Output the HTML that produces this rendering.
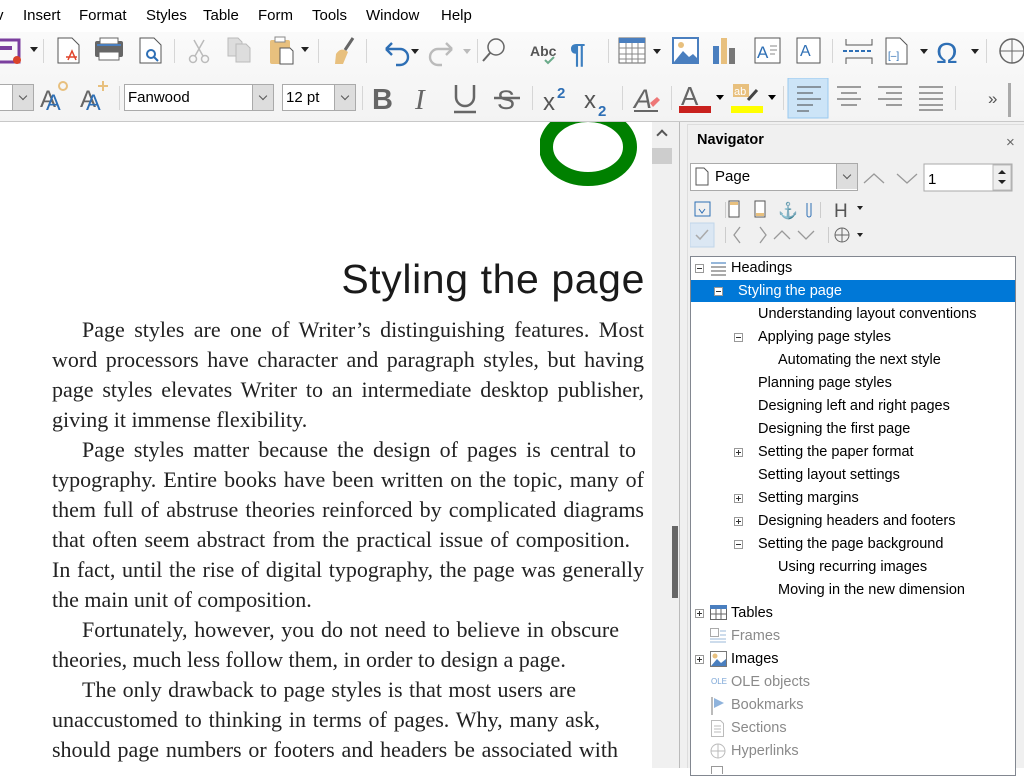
<!DOCTYPE html>
<html><head><meta charset="utf-8"><style>
*{margin:0;padding:0;box-sizing:border-box}
body{width:1024px;height:768px;overflow:hidden;position:relative;background:#fff;font-family:"Liberation Sans",sans-serif;font-size:14px;color:#000}
.abs{position:absolute}
#menu{left:0;top:0;width:1024px;height:32px;background:#fff}
#menu span{position:absolute;top:7px;font-size:15px}
#tb{left:0;top:32px;width:1024px;height:90px;background:linear-gradient(#fafafa,#f3f3f3)}
#tb2line{left:0;top:121px;width:1024px;height:1px;background:#c8c8c8}
.combo{position:absolute;height:27px;border:1px solid #aaa;background:#fff;font-size:15px;padding:4px 0 0 3px}
.combo i{position:absolute;right:0;top:0;width:21px;height:25px;background:#ddd;border-left:1px solid #aaa}
.combo i:after{content:"";position:absolute;left:7px;top:8px;width:5px;height:5px;border-right:1px solid #555;border-bottom:1px solid #555;transform:rotate(45deg)}
#doc{left:0;top:122px;width:652px;height:646px;background:#fff;overflow:hidden}
.ln{position:absolute;left:52px;width:592px;font-family:"Liberation Serif",serif;font-size:22px;color:#222;text-align:justify;text-align-last:justify;white-space:nowrap;line-height:30px}
.ln.l{text-align-last:left}
#vs{left:652px;top:122px;width:20px;height:646px;background:#f0f0f0}
#side{left:672px;top:122px;width:352px;height:646px;background:#f0f0f0}
#tree{left:690px;top:256px;width:326px;height:520px;background:#fff;border:1px solid #828790}
.r{position:absolute;font-size:14.5px;height:23px;line-height:23px;white-space:nowrap}
.pm{position:absolute;width:9px;height:9px;border:1px solid #999;background:#fff}
.pm:before{content:"";position:absolute;left:1px;top:3px;width:5px;height:1px;background:#333}
.pm.p:after{content:"";position:absolute;left:3px;top:1px;width:1px;height:5px;background:#333}
.g{color:#8a8a8a}
</style></head><body>
<div id="menu" class="abs">
<span style="left:-4px">v</span><span style="left:23px">Insert</span><span style="left:79px">Format</span><span style="left:146px">Styles</span><span style="left:203px">Table</span><span style="left:258px">Form</span><span style="left:312px">Tools</span><span style="left:366px">Window</span><span style="left:441px">Help</span>
</div>
<div id="tb" class="abs"></div>
<div id="tb2line" class="abs"></div>
<svg class="abs" style="left:0;top:32px" width="1024" height="40">
<rect x="-6" y="8" width="25" height="22" fill="none" stroke="#7b3f9e" stroke-width="3"/><rect x="-2" y="14" width="14" height="4" fill="#7b3f9e"/><circle cx="17" cy="28" r="4" fill="#d9432b"/>
<path d="M58 6h14l7 7v18h-21z" fill="#fff" stroke="#555"/><path d="M68 28l4-9 4 9m-10-3h11" stroke="#e0442b" fill="none" stroke-width="1.5"/>
<rect x="95" y="9" width="28" height="16" rx="2" fill="#666"/><rect x="100" y="6" width="18" height="6" fill="#fff" stroke="#666"/><rect x="99" y="20" width="20" height="8" fill="#fff" stroke="#666"/><rect x="97" y="12" width="24" height="2" fill="#4a7fbf"/>
<path d="M140 6h14l7 7v18h-21z" fill="#fff" stroke="#555"/><circle cx="151" cy="22" r="4" fill="none" stroke="#2e6fb5" stroke-width="2"/><path d="M154 25l4 4" stroke="#2e6fb5" stroke-width="2"/>
<g stroke="#bbb" fill="none" stroke-width="1.5"><circle cx="193" cy="27" r="3.5"/><circle cx="205" cy="27" r="3.5"/><path d="M195 24l9-16M203 24l-9-16"/></g>
<g fill="#ddd" stroke="#bbb"><path d="M228 6h10l4 4v14h-14z"/><path d="M236 12h10l4 4v14h-14z"/></g>
<rect x="270" y="8" width="20" height="24" rx="2" fill="#e8c07e"/><rect x="275" y="5" width="10" height="5" fill="#fff" stroke="#888"/><path d="M280 16h10l3 3v13h-13z" fill="#fff" stroke="#555"/>
<path d="M336 22c4-6 8-5 12-2l-5 12h-8z" fill="#e8c07e"/><path d="M345 18l8-12" stroke="#666" stroke-width="3"/>
<path d="M386 17h14a8 8 0 0 1 0 16h-4M386 17l6-6M386 17l6 6" stroke="#2e6fb5" stroke-width="2.4" fill="none"/>
<path d="M452 17h-14a8 8 0 0 0 0 16h4M452 17l-6-6M452 17l-6 6" stroke="#bbb" stroke-width="2.4" fill="none"/>
<circle cx="496" cy="15" r="8" fill="none" stroke="#666" stroke-width="1.5"/><path d="M490 21l-7 8" stroke="#666" stroke-width="2"/>
<text x="530" y="24" font-size="14" font-weight="bold" fill="#555" font-family="Liberation Sans">Abc</text><path d="M545 28l3 3 6-6" stroke="#6aaa8a" stroke-width="2" fill="none"/>
<text x="570" y="31" font-size="28" font-weight="bold" fill="#3d7fc0" font-family="Liberation Sans">¶</text>
<rect x="619" y="6" width="26" height="25" fill="#fff" stroke="#666"/><rect x="619" y="6" width="26" height="5" fill="#4a7fbf"/><path d="M619 16h26M619 22h26M619 27h26M626 11v20M632 11v20M638 11v20" stroke="#888"/>
<rect x="673" y="6" width="25" height="25" fill="#fff" stroke="#4a7fbf" stroke-width="2"/><path d="M674 30l9-11 6 6 4-3 5 5v3z" fill="#4a7fbf"/><circle cx="681" cy="13" r="3" fill="#e8c07e"/>
<rect x="713" y="14" width="6" height="18" fill="#4a7fbf"/><rect x="721" y="6" width="6" height="26" fill="#e8c07e"/><rect x="729" y="16" width="6" height="16" fill="#777"/>
<rect x="755" y="6" width="25" height="25" fill="#fff" stroke="#555"/><text x="757" y="26" font-size="17" fill="#2e6fb5" font-family="Liberation Sans">A</text><path d="M770 14h7M770 18h7M770 22h5" stroke="#888"/>
<rect x="797" y="6" width="23" height="25" fill="#fff" stroke="#555"/><text x="800" y="24" font-size="16" fill="#2e6fb5" font-family="Liberation Sans">A</text>
<path d="M846 7v6h26V7M846 32v-6h26v6" stroke="#555" fill="none"/><path d="M843 19h30" stroke="#2e6fb5" stroke-width="2" stroke-dasharray="4 2"/>
<path d="M886 6h14l7 7v19h-21z" fill="#fff" stroke="#555"/><text x="888" y="27" font-size="10" fill="#2e6fb5">[–]</text>
<text x="936" y="31" font-size="29" fill="#2e6fb5" font-family="Liberation Sans">Ω</text>
<circle cx="1012" cy="19" r="12" fill="none" stroke="#666" stroke-width="1.5"/><path d="M1000 19h24M1012 7v24" stroke="#666"/>
<g fill="#222"><path d="M30 15h8l-4 5z"/><path d="M301 15h8l-4 5z"/><path d="M411 17h8l-4 5z"/><path d="M463 17h8l-4 5z" fill="#bbb"/><path d="M653 17h8l-4 5z"/><path d="M920 17h8l-4 5z"/><path d="M971 17h8l-4 5z"/></g>
<g fill="#d6d6d6"><rect x="43" y="7" width="1" height="24"/><rect x="174" y="7" width="1" height="24"/><rect x="318" y="7" width="1" height="24"/><rect x="366" y="7" width="1" height="24"/><rect x="477" y="7" width="1" height="24"/><rect x="608" y="7" width="1" height="24"/><rect x="832" y="7" width="1" height="24"/><rect x="986" y="7" width="1" height="24"/></g>
</svg>
<div class="combo" style="left:-2px;top:84px;width:36px"><i></i></div>
<div class="combo" style="left:124px;top:84px;width:150px">Fanwood<i></i></div>
<div class="combo" style="left:282px;top:84px;width:74px">12 pt<i></i></div>
<svg class="abs" style="left:0;top:78px" width="1024" height="43">
<text x="40" y="29" font-size="24" fill="#666" font-family="Liberation Sans">A</text><text x="46" y="32" font-size="22" fill="#2e6fb5" font-family="Liberation Sans">A</text><circle cx="63" cy="8" r="4" fill="none" stroke="#e8c07e" stroke-width="2"/>
<text x="80" y="29" font-size="24" fill="#666" font-family="Liberation Sans">A</text><text x="86" y="32" font-size="22" fill="#2e6fb5" font-family="Liberation Sans">A</text><path d="M103 3v10M98 8h10" stroke="#e8c07e" stroke-width="2"/>
<text x="372" y="31" font-size="29" font-weight="bold" fill="#666" font-family="Liberation Sans">B</text>
<text x="415" y="31" font-size="29" font-style="italic" fill="#666" font-family="Liberation Serif">I</text>
<path d="M456 7v12a9 9 0 0 0 18 0V7M454 34h22" stroke="#666" stroke-width="2.5" fill="none"/>
<text x="497" y="31" font-size="27" fill="#666" font-family="Liberation Sans">S</text><path d="M494 20h26" stroke="#666" stroke-width="2.5"/>
<text x="543" y="32" font-size="24" fill="#555" font-family="Liberation Sans">x</text><text x="557" y="20" font-size="15" fill="#2e6fb5" font-weight="bold">2</text>
<text x="584" y="30" font-size="24" fill="#555" font-family="Liberation Sans">x</text><text x="598" y="38" font-size="15" fill="#2e6fb5" font-weight="bold">2</text>
<text x="634" y="30" font-size="27" fill="#666" font-family="Liberation Sans" font-style="italic">A</text><path d="M650 25l7-6 3 3-7 7z" fill="#e77"/><path d="M634 33h24" stroke="#666" stroke-width="2"/>
<text x="681" y="27" font-size="26" fill="#666" font-family="Liberation Sans">A</text><rect x="679" y="28" width="32" height="7" fill="#c9211e"/>
<rect x="733" y="6" width="16" height="13" fill="#e8c07e"/><text x="734" y="17" font-size="11" fill="#fff">ab</text><path d="M748 22l9-10" stroke="#444" stroke-width="3"/><rect x="731" y="28" width="32" height="7" fill="#ff0"/>
<path d="M716 17h8l-4 5z M768 17h8l-4 5z"/>
<rect x="788" y="0" width="40" height="40" fill="#cce4f7" stroke="#99c9ef"/>
<g stroke="#444"><path d="M797 9h24M797 15h16M797 21h24M797 27h16M797 33h12"/><path d="M837 9h24M841 15h16M837 21h24M841 27h16"/><path d="M878 9h24M886 15h16M878 21h24M886 27h16"/><path d="M919 9h24M919 15h24M919 21h24M919 27h24M919 32h24"/></g>
<text x="988" y="26" font-size="17" fill="#555">»</text>
<g fill="#d6d6d6"><rect x="119" y="8" width="1" height="24"/><rect x="362" y="8" width="1" height="24"/><rect x="532" y="8" width="1" height="24"/><rect x="622" y="8" width="1" height="24"/><rect x="671" y="8" width="1" height="24"/><rect x="783" y="8" width="1" height="24"/><rect x="955" y="8" width="1" height="24"/></g>
<rect x="1008" y="5" width="3" height="34" fill="#aaa"/>
</svg>
<div id="doc" class="abs">
<svg class="abs" style="left:540px;top:-10px" width="100" height="80"><ellipse cx="48" cy="35" rx="42" ry="32" fill="none" stroke="#008000" stroke-width="14"/></svg>
<div class="abs" style="right:7px;top:134px;font-size:41px;color:#1a1a1a;font-family:'Liberation Sans',sans-serif;letter-spacing:0.6px">Styling the page</div>
<div class="ln" style="top:193px;left:82px;width:562px">Page styles are one of Writer’s distinguishing features. Most</div>
<div class="ln" style="top:223px">word processors have character and paragraph styles, but having</div>
<div class="ln" style="top:253px">page styles elevates Writer to an intermediate desktop publisher,</div>
<div class="ln l" style="top:283px">giving it immense flexibility.</div>
<div class="ln" style="top:313px;left:82px;width:554px">Page styles matter because the design of pages is central to</div>
<div class="ln" style="top:343px">typography. Entire books have been written on the topic, many of</div>
<div class="ln" style="top:373px">them full of abstruse theories reinforced by complicated diagrams</div>
<div class="ln" style="top:403px;width:578px">that often seem abstract from the practical issue of composition.</div>
<div class="ln" style="top:433px">In fact, until the rise of digital typography, the page was generally</div>
<div class="ln l" style="top:463px">the main unit of composition.</div>
<div class="ln" style="top:493px;left:82px;width:537px">Fortunately, however, you do not need to believe in obscure</div>
<div class="ln l" style="top:523px">theories, much less follow them, in order to design a page.</div>
<div class="ln" style="top:553px;left:82px;width:494px">The only drawback to page styles is that most users are</div>
<div class="ln" style="top:583px;width:548px">unaccustomed to thinking in terms of pages. Why, many ask,</div>
<div class="ln" style="top:613px;width:566px">should page numbers or footers and headers be associated with</div>
</div>
<div id="vs" class="abs"><div class="abs" style="left:0;top:26px;width:20px;height:16px;background:#cdcdcd"></div><div class="abs" style="left:6px;top:9px;width:8px;height:8px;border-left:2px solid #555;border-top:2px solid #555;transform:rotate(45deg)"></div></div>
<div id="side" class="abs">
<div class="abs" style="left:0;top:0;width:8px;height:646px;background:#f0f0f0;border-right:1px solid #bbb"></div>
<div class="abs" style="left:0;top:404px;width:6px;height:72px;background:#666"></div>
<div class="abs" style="left:15px;top:2px;width:337px;height:644px;border-left:1px solid #ddd;border-top:1px solid #ddd"></div>
<div class="abs" style="left:25px;top:10px;font-weight:bold;font-size:14.5px">Navigator</div>
<div class="abs" style="left:334px;top:12px;font-size:15px;color:#666">×</div>
</div>
<div class="combo" style="left:690px;top:163px;width:168px;height:28px;font-size:15px;padding-left:24px">Page<i></i></div>
<svg class="abs" style="left:690px;top:163px" width="330" height="90">
<path d="M6 5h8l4 4v13H6z" fill="#fff" stroke="#555"/>
<path d="M174 20l10-9 10 9M207 11l10 9 10-9" stroke="#999" fill="none" stroke-width="1.3"/>
<rect x="234" y="1" width="88" height="27" fill="#fff" stroke="#aaa"/><text x="238" y="21" font-size="15" font-family="Liberation Sans">1</text>
<rect x="303" y="2" width="18" height="25" fill="#eee" stroke="#bbb"/><path d="M308 11h8l-4-4z M308 17h8l-4 4z" fill="#222"/>
<rect x="5" y="39" width="15" height="14" fill="none" stroke="#2e6fb5"/><path d="M9 46l3 4 3-4" stroke="#2e6fb5" fill="none"/>
<rect x="39" y="38" width="10" height="16" fill="#fff" stroke="#555"/><rect x="40" y="39" width="8" height="3" fill="#e8c07e"/>
<rect x="65" y="38" width="10" height="16" fill="#fff" stroke="#555"/><rect x="66" y="50" width="8" height="3" fill="#e8c07e"/>
<text x="88" y="53" font-size="16" fill="#2e6fb5">⚓</text><path d="M117 40v12a2 2 0 0 0 4 0V40" stroke="#2e6fb5" fill="none"/>
<text x="144" y="54" font-size="19" fill="#555" font-family="Liberation Sans">H</text><path d="M167 43h6l-3 4z" fill="#222"/>
<rect x="0" y="60" width="24" height="24" fill="#dbe7f3" stroke="#c0d6ea"/><path d="M6 72l4 4 8-9" stroke="#aaa" fill="none" stroke-width="1.5"/>
<path d="M50 64l-6 8 6 8M70 64l6 8-6 8M84 76l8-8 8 8M108 68l8 8 8-8" stroke="#999" fill="none" stroke-width="1.3"/>
<circle cx="152" cy="72" r="7" fill="none" stroke="#666"/><path d="M145 72h14M152 65v14" stroke="#666"/><path d="M167 70h6l-3 4z" fill="#222"/>
<g fill="#ccc"><rect x="35" y="39" width="1" height="16"/><rect x="130" y="39" width="1" height="16"/><rect x="35" y="64" width="1" height="16"/><rect x="138" y="64" width="1" height="16"/></g>
</svg>
<div id="tree" class="abs">
<div class="abs" style="left:0;top:23px;width:324px;height:22px;background:#0078d7"></div>
<div class="pm" style="left:4px;top:7px"></div>
<svg class="abs" style="left:20px;top:4px" width="16" height="16"><path d="M0 2h15M0 6h15M0 10h15M0 14h15" stroke="#555"/><path d="M0 2h15" stroke="#2e6fb5"/></svg>
<div class="r" style="left:40px;top:0">Headings</div>
<div class="pm" style="left:23px;top:30px"></div>
<div class="r" style="left:47px;top:23px;color:#fff">Styling the page</div>
<div class="r" style="left:67px;top:46px">Understanding layout conventions</div>
<div class="pm" style="left:43px;top:76px"></div><div class="r" style="left:67px;top:69px">Applying page styles</div>
<div class="r" style="left:87px;top:92px">Automating the next style</div>
<div class="r" style="left:67px;top:115px">Planning page styles</div>
<div class="r" style="left:67px;top:138px">Designing left and right pages</div>
<div class="r" style="left:67px;top:161px">Designing the first page</div>
<div class="pm p" style="left:43px;top:191px"></div><div class="r" style="left:67px;top:184px">Setting the paper format</div>
<div class="r" style="left:67px;top:207px">Setting layout settings</div>
<div class="pm p" style="left:43px;top:237px"></div><div class="r" style="left:67px;top:230px">Setting margins</div>
<div class="pm p" style="left:43px;top:260px"></div><div class="r" style="left:67px;top:253px">Designing headers and footers</div>
<div class="pm" style="left:43px;top:283px"></div><div class="r" style="left:67px;top:276px">Setting the page background</div>
<div class="r" style="left:87px;top:299px">Using recurring images</div>
<div class="r" style="left:87px;top:322px">Moving in the new dimension</div>
<div class="pm p" style="left:4px;top:352px"></div>
<svg class="abs" style="left:19px;top:348px" width="18" height="16"><rect x="0.5" y="0.5" width="16" height="14" fill="#fff" stroke="#666"/><rect x="0" y="0" width="17" height="4" fill="#4a7fbf"/><path d="M0 9h17M6 4v11M11 4v11" stroke="#666"/></svg>
<div class="r" style="left:40px;top:345px">Tables</div>
<svg class="abs" style="left:19px;top:371px" width="18" height="16"><rect x="0.5" y="0.5" width="8" height="8" fill="none" stroke="#aaa"/><path d="M10 3h6M10 7h6M0 11h16M0 14h16" stroke="#9bb8d8"/></svg>
<div class="r g" style="left:40px;top:368px">Frames</div>
<div class="pm p" style="left:4px;top:398px"></div>
<svg class="abs" style="left:19px;top:394px" width="18" height="16"><rect x="0.5" y="0.5" width="16" height="15" fill="#fff" stroke="#777"/><path d="M1 15l6-7 4 4 5-4v7z" fill="#4a7fbf"/><circle cx="5" cy="5" r="2.5" fill="#e8c07e"/></svg>
<div class="r" style="left:40px;top:391px">Images</div>
<div class="abs" style="left:20px;top:420px;font-size:8px;color:#7aa5d6">OLE</div><div class="r g" style="left:40px;top:414px">OLE objects</div>
<svg class="abs" style="left:20px;top:440px" width="16" height="18"><path d="M1 0v18" stroke="#bbb" stroke-width="2"/><path d="M3 1l10 5-10 5z" fill="#8fb3dc"/></svg>
<div class="r g" style="left:40px;top:437px">Bookmarks</div>
<svg class="abs" style="left:20px;top:463px" width="14" height="17"><path d="M.5 .5h9l3 3v13h-12z" fill="#fff" stroke="#bbb"/><path d="M3 6h7M3 9h7M3 12h7" stroke="#bbb"/></svg>
<div class="r g" style="left:40px;top:460px">Sections</div>
<svg class="abs" style="left:19px;top:486px" width="16" height="16"><circle cx="8" cy="8" r="7" fill="none" stroke="#bbb"/><path d="M1 8h14M8 1v14" stroke="#bbb"/></svg>
<div class="r g" style="left:40px;top:483px">Hyperlinks</div>
<div class="abs" style="left:20px;top:509px;width:12px;height:8px;border:1px solid #999;border-bottom:none"></div>
</div>
</body></html>
